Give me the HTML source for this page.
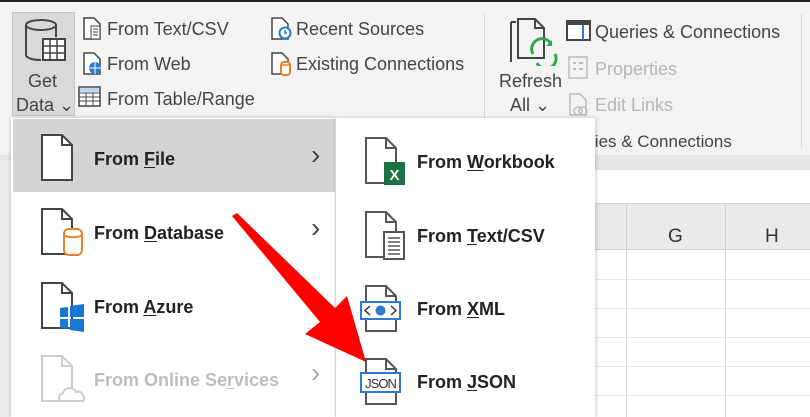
<!DOCTYPE html>
<html><head><meta charset="utf-8"><style>
*{margin:0;padding:0;box-sizing:border-box}
body{width:810px;height:417px;overflow:hidden;background:#fff;font-family:"Liberation Sans",sans-serif;position:relative}
.a{position:absolute}
.rib{color:#444;font-size:18px;white-space:nowrap}
.dis{color:#b5b5b5}
.m{font-weight:bold;font-size:18px;color:#222;white-space:nowrap}
u{text-decoration:underline;text-underline-offset:2px}
.chev{font-size:28px;color:#444;line-height:28px}
</style></head><body>
<div class="a" style="left:0;top:0;width:810px;height:2px;background:#222"></div>
<div class="a" style="left:0;top:2px;width:810px;height:153px;background:#f3f3f3"></div>
<div class="a" style="left:0;top:155px;width:810px;height:15px;background:#e6e6e6"></div>
<div class="a" style="left:0;top:170px;width:810px;height:34px;background:#fff;border-bottom:1px solid #d4d4d4"></div>
<div class="a" style="left:0;top:204px;width:810px;height:46px;background:#eaeaea;border-bottom:1px solid #d0d0d0"></div>
<div class="a" style="left:626px;top:204px;width:1px;height:213px;background:#d4d4d4"></div>
<div class="a" style="left:725px;top:204px;width:1px;height:213px;background:#d4d4d4"></div>
<div class="a" style="left:595px;top:279px;width:215px;height:1px;background:#e8e8e8"></div>
<div class="a" style="left:595px;top:308px;width:215px;height:1px;background:#e8e8e8"></div>
<div class="a" style="left:595px;top:337px;width:215px;height:1px;background:#e8e8e8"></div>
<div class="a" style="left:595px;top:366px;width:215px;height:1px;background:#e8e8e8"></div>
<div class="a" style="left:595px;top:395px;width:215px;height:1px;background:#e8e8e8"></div>
<div class="a" style="left:668px;top:226px;font-size:19px;color:#333">G</div>
<div class="a" style="left:765px;top:226px;font-size:19px;color:#333">H</div>
<div class="a" style="left:0;top:160px;width:11px;height:257px;background:#ececec"></div>

<div class="a" style="left:484px;top:14px;width:1px;height:136px;background:#d6d6d6"></div>
<div class="a" style="left:801px;top:14px;width:1px;height:134px;background:#d6d6d6"></div>

<div class="a" style="left:12px;top:12px;width:63px;height:104px;background:#d9d9d9;border:1px solid #c4c4c4"></div>
<svg class="a" style="left:22px;top:18px" width="48" height="48" viewBox="0 0 48 48"><ellipse cx="19" cy="7" rx="15" ry="5" fill="none" stroke="#444" stroke-width="2"/><path d="M4 7v30c0 3 7 5 15 5" fill="none" stroke="#444" stroke-width="2"/><path d="M34 7v12" stroke="#444" stroke-width="2"/><rect x="21" y="21" width="22" height="21" fill="#fff" stroke="#444" stroke-width="2"/><path d="M21 28h22M21 35h22M28 21v21M35 21v21" stroke="#444" stroke-width="1.5"/></svg>
<div class="a rib" style="left:28px;top:71px">Get</div>
<div class="a rib" style="left:16px;top:95px">Data ⌄</div>

<svg class="a" style="left:82px;top:16px" width="22" height="24"><path d="M2 2h10l6 6v15H2z" fill="#fff" stroke="#444" stroke-width="1.5"/><rect x="9" y="10" width="9" height="13" fill="#fff" stroke="#444"/><path d="M11 13h5M11 16h5M11 19h5" stroke="#444"/></svg>
<div class="a rib" style="left:107px;top:19px">From Text/CSV</div>
<svg class="a" style="left:82px;top:51px" width="22" height="24"><path d="M2 2h10l6 6v15H2z" fill="#fff" stroke="#444" stroke-width="1.5"/><circle cx="13" cy="17" r="6" fill="#2b7bd6"/><path d="M7 17h12M13 11v12" stroke="#fff"/></svg>
<div class="a rib" style="left:107px;top:54px">From Web</div>
<svg class="a" style="left:78px;top:86px" width="24" height="22"><rect x="1" y="1" width="21" height="19" fill="#fff" stroke="#444" stroke-width="1.5"/><rect x="2" y="2" width="19" height="4" fill="#bcd7f3"/><path d="M1 7h21M1 11h21M1 15h21M8 7v13M15 7v13" stroke="#444"/></svg>
<div class="a rib" style="left:107px;top:89px">From Table/Range</div>
<svg class="a" style="left:270px;top:16px" width="24" height="24"><path d="M2 2h10l6 6v15H2z" fill="#fff" stroke="#444" stroke-width="1.5"/><circle cx="15" cy="17" r="5.5" fill="#fff" stroke="#2b7bd6" stroke-width="2"/><path d="M15 14v3h2" stroke="#2b7bd6" stroke-width="1.5" fill="none"/></svg>
<div class="a rib" style="left:296px;top:19px">Recent Sources</div>
<svg class="a" style="left:270px;top:51px" width="24" height="26"><path d="M2 2h10l6 6v15H2z" fill="#fff" stroke="#444" stroke-width="1.5"/><rect x="11" y="11" width="9" height="13" rx="3" fill="#fff" stroke="#e8822a" stroke-width="2"/><path d="M11 14h9" stroke="#e8822a" stroke-width="1.5"/></svg>
<div class="a rib" style="left:296px;top:54px">Existing Connections</div>

<svg class="a" style="left:508px;top:16px" width="50" height="50"><path d="M3 6v40M3 6h5" stroke="#444" stroke-width="2" fill="none"/><path d="M10 3h17l9 9v30H10z" fill="#f3f3f3" stroke="#444" stroke-width="2"/><path d="M27 3v9h9" fill="none" stroke="#444" stroke-width="2"/><path d="M25 38a10 10 0 0 1 18-10M47 38a10 10 0 0 1-18 9" fill="none" stroke="#2ea84f" stroke-width="3"/><path d="M44 24l0 6-6 0z" fill="#2ea84f"/></svg>
<div class="a rib" style="left:499px;top:71px">Refresh</div>
<div class="a rib" style="left:510px;top:95px">All ⌄</div>
<svg class="a" style="left:566px;top:20px" width="26" height="22"><rect x="1" y="1" width="23" height="19" fill="#fff" stroke="#444" stroke-width="2"/><rect x="2" y="2" width="21" height="3" fill="#444"/><path d="M17 5v15" stroke="#2b7bd6" stroke-width="2"/></svg>
<div class="a rib" style="left:595px;top:22px">Queries &amp; Connections</div>
<svg class="a" style="left:568px;top:56px" width="22" height="24"><rect x="1" y="1" width="18" height="21" fill="none" stroke="#bbb" stroke-width="1.5"/><path d="M5 7h3M5 13h3M11 7h4M11 13h4" stroke="#bbb" stroke-width="2"/></svg>
<div class="a rib dis" style="left:595px;top:59px">Properties</div>
<svg class="a" style="left:568px;top:92px" width="22" height="26"><path d="M2 2h10l6 6v15H2z" fill="none" stroke="#bbb" stroke-width="1.5"/><circle cx="10" cy="19" r="4" fill="none" stroke="#bbb" stroke-width="1.5"/><circle cx="15" cy="19" r="4" fill="none" stroke="#bbb" stroke-width="1.5"/></svg>
<div class="a rib dis" style="left:595px;top:95px">Edit Links</div>
<div class="a rib" style="left:557px;top:132px;font-size:17px">Queries &amp; Connections</div>

<div class="a" style="left:11px;top:118px;width:324px;height:299px;background:#fff;box-shadow:0 0 4px rgba(0,0,0,.25)"></div>
<div class="a" style="left:13px;top:119px;width:322px;height:73px;background:#d4d4d4"></div>
<svg class="a" style="left:40px;top:133px" width="36" height="52"><path d="M2 2h20l10 10v35H2z" fill="#fff" stroke="#444" stroke-width="2"/><path d="M22 2v10h10" fill="none" stroke="#444" stroke-width="2"/></svg>
<div class="a m" style="left:94px;top:149px">From <u>F</u>ile</div>
<div class="a chev" style="left:311px;top:141px">›</div>
<svg class="a" style="left:40px;top:207px" width="46" height="52"><path d="M2 2h20l10 10v35H2z" fill="#fff" stroke="#444" stroke-width="2"/><path d="M22 2v10h10" fill="none" stroke="#444" stroke-width="2"/><rect x="24" y="22" width="18" height="26" rx="5" fill="#fff" stroke="#e8822a" stroke-width="2"/><path d="M24 28c4 3 14 3 18 0" fill="none" stroke="#e8822a" stroke-width="2"/></svg>
<div class="a m" style="left:94px;top:223px">From <u>D</u>atabase</div>
<div class="a chev" style="left:311px;top:214px">›</div>
<svg class="a" style="left:40px;top:281px" width="46" height="52"><path d="M2 2h20l10 10v35H2z" fill="#fff" stroke="#444" stroke-width="2"/><path d="M22 2v10h10" fill="none" stroke="#444" stroke-width="2"/><path d="M20 27l8-1v10h-8zM30 25l14-2v13H30zM20 38h8v10l-8-1zM30 38h14v13l-14-2z" fill="#1976d2"/></svg>
<div class="a m" style="left:94px;top:297px">From <u>A</u>zure</div>
<svg class="a" style="left:40px;top:354px" width="46" height="52"><path d="M2 2h20l10 10v35H2z" fill="#fff" stroke="#ccc" stroke-width="2"/><path d="M22 2v10h10" fill="none" stroke="#ccc" stroke-width="2"/><path d="M20 47a5 5 0 0 1 3-8a7 7 0 0 1 13-1a5 5 0 0 1 7 4a3 3 0 0 1 0 5z" fill="#fff" stroke="#ccc" stroke-width="2"/></svg>
<div class="a m" style="left:94px;top:370px;color:#bdbdbd">From Online Se<u>r</u>vices</div>
<div class="a chev" style="left:311px;top:359px;color:#aaa">›</div>

<div class="a" style="left:335px;top:118px;width:260px;height:299px;background:#fff;border-left:1px solid #d8d8d8;box-shadow:1px 0 4px rgba(0,0,0,.2)"></div>
<svg class="a" style="left:364px;top:136px" width="44" height="52"><path d="M2 2h20l10 10v35H2z" fill="#fff" stroke="#555" stroke-width="2"/><path d="M22 2v10h10" fill="none" stroke="#555" stroke-width="2"/><rect x="20" y="26" width="21" height="23" fill="#1e7145"/><text x="30.5" y="44" font-family="Liberation Sans" font-weight="bold" font-size="15" fill="#fff" text-anchor="middle">X</text></svg>
<div class="a m" style="left:417px;top:152px">From <u>W</u>orkbook</div>
<svg class="a" style="left:364px;top:210px" width="44" height="52"><path d="M2 2h20l10 10v35H2z" fill="#fff" stroke="#555" stroke-width="2"/><path d="M22 2v10h10" fill="none" stroke="#555" stroke-width="2"/><rect x="20" y="22" width="20" height="27" fill="#fff" stroke="#555" stroke-width="2"/><path d="M24 28h12M24 32h12M24 36h12M24 40h12M24 44h12" stroke="#555" stroke-width="1.5"/></svg>
<div class="a m" style="left:417px;top:226px">From <u>T</u>ext/CSV</div>
<svg class="a" style="left:358px;top:284px" width="46" height="52"><path d="M8 2h20l10 10v35H8z" fill="#fff" stroke="#555" stroke-width="2"/><path d="M28 2v10h10" fill="none" stroke="#555" stroke-width="2"/><rect x="3" y="18" width="39" height="17" fill="#fff" stroke="#2b7bd6" stroke-width="2"/><path d="M12 22l-5 4.5 5 4.5M33 22l5 4.5-5 4.5" fill="none" stroke="#333" stroke-width="1.5"/><circle cx="22.5" cy="26.5" r="5" fill="#2b7bd6"/></svg>
<div class="a m" style="left:417px;top:299px">From <u>X</u>ML</div>
<svg class="a" style="left:358px;top:357px" width="46" height="52"><path d="M8 2h20l10 10v35H8z" fill="#fff" stroke="#555" stroke-width="2"/><path d="M28 2v10h10" fill="none" stroke="#555" stroke-width="2"/><rect x="3" y="16" width="39" height="19" fill="#fff" stroke="#2b7bd6" stroke-width="2"/><text x="22.5" y="31" font-family="Liberation Sans" font-size="13" fill="#333" text-anchor="middle" letter-spacing="-1">JSON</text></svg>
<div class="a m" style="left:417px;top:372px">From <u>J</u>SON</div>

<svg class="a" style="left:0;top:0" width="810" height="417"><polygon points="232,216 237,213 335,308 347,296 366,362 305,334 320,322" fill="#f00"/></svg>
</body></html>
